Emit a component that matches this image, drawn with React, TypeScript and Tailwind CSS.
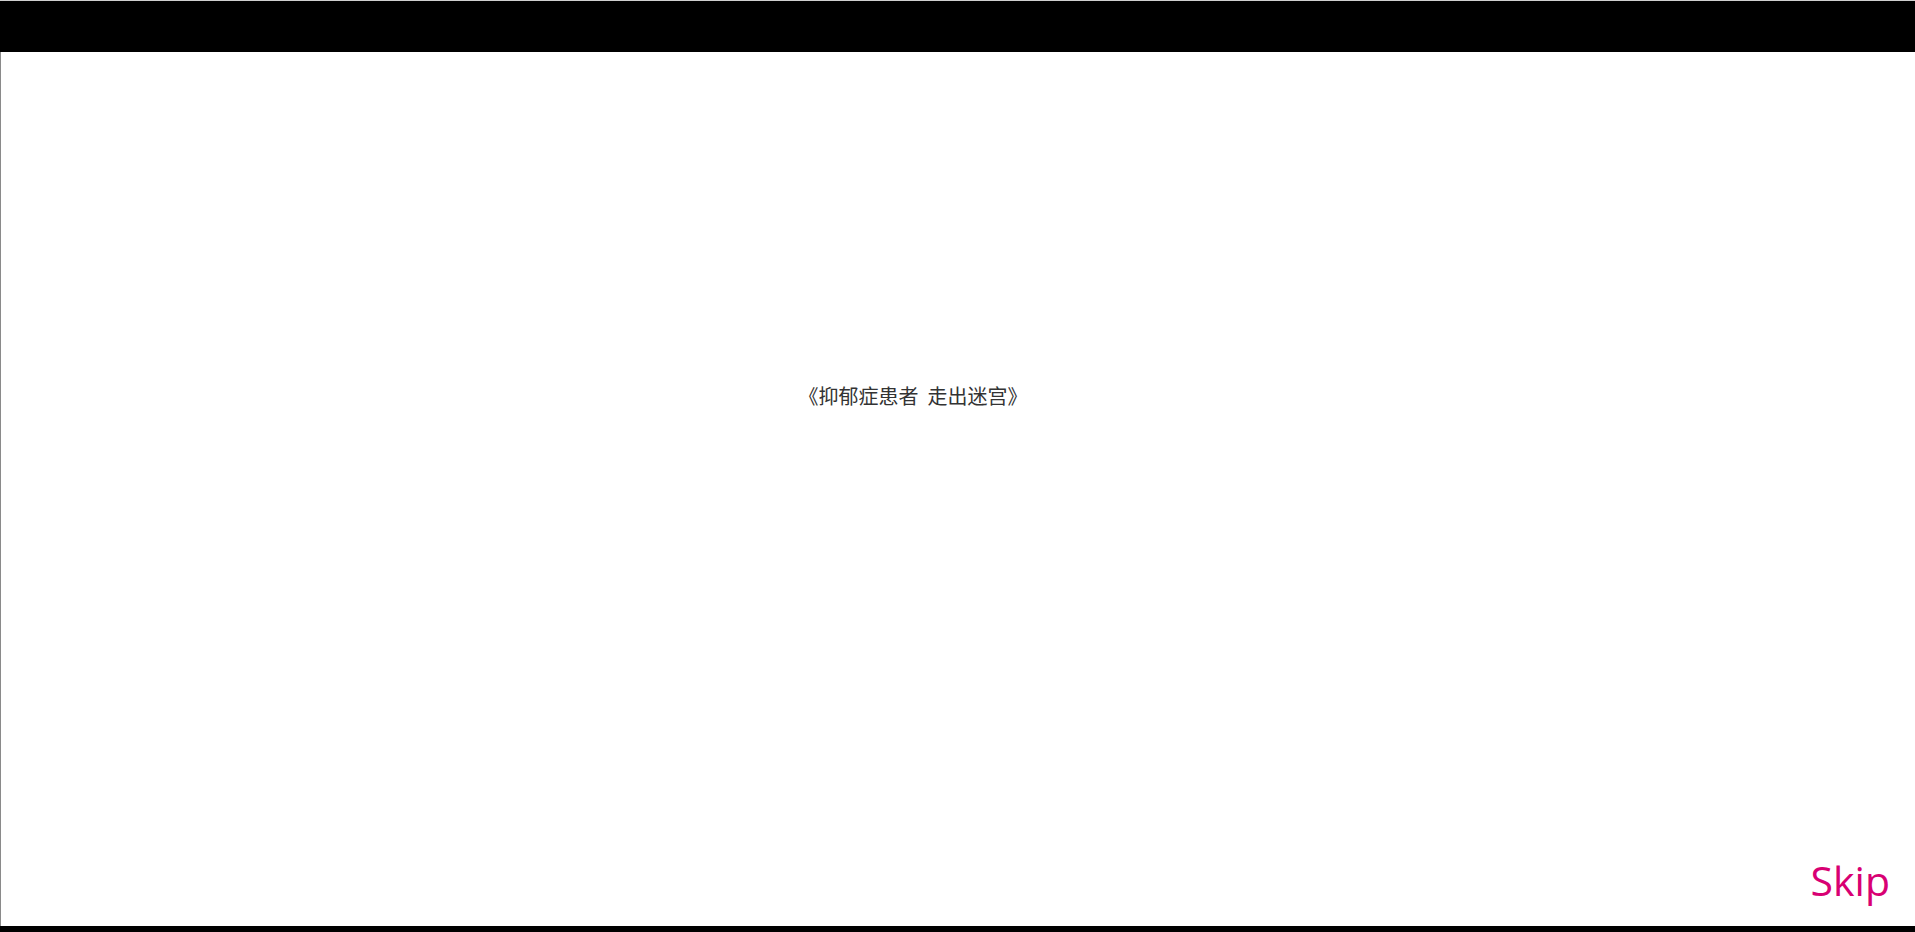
export default function App() {
  return (
    <div className="flex h-[932px] w-full flex-col bg-white">
      {/* top frame */}
      <div className="h-px bg-[#cfcfcf]" />
      <div className="h-[51px] bg-black" />

      <main className="flex flex-1 flex-col border-l border-[#8a8a8a]">
        <div
          className="pt-[330px] pr-[90px] text-center text-[20px] leading-[28px] text-[#333]"
          style={{ fontFamily: '"Microsoft YaHei", "Noto Sans CJK SC", sans-serif' }}
        >
          《抑郁症患者&nbsp;&nbsp;走出迷宫》
        </div>

        <div className="flex-1" />

        <div className="flex justify-end pr-[25px] pb-[22px]">
          <button
            className="text-[41px] leading-[48px] text-[#d80073]"
            style={{ fontFamily: '"Open Sans", "Noto Sans", sans-serif' }}
          >
            Skip
          </button>
        </div>
      </main>

      <div className="h-[6px] bg-black" />
    </div>
  )
}
